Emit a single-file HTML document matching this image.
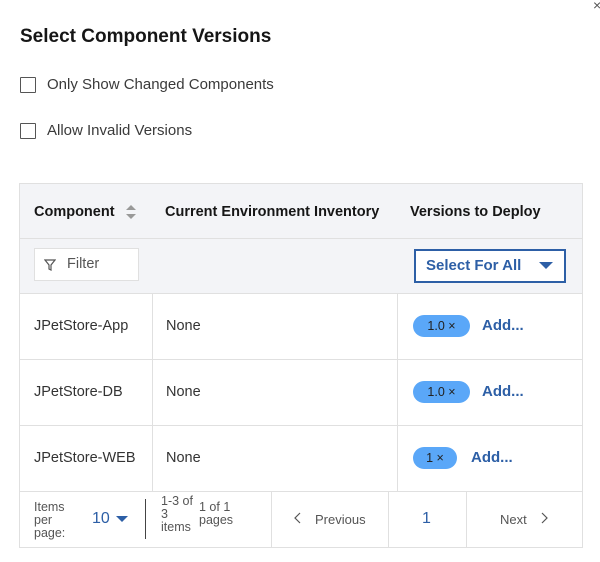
<!DOCTYPE html>
<html><head><style>
*{box-sizing:border-box;margin:0;padding:0}
body{width:600px;height:562px;background:#fff;font-family:"Liberation Sans",sans-serif;color:#161616;position:relative;overflow:hidden}
.a{position:absolute}
h1{position:absolute;left:20px;top:26px;font-size:19px;font-weight:bold;color:#161616}
.cb{position:absolute;left:20px;width:16px;height:16px;border:1.5px solid #555;border-radius:1px}
.lbl{position:absolute;left:47px;font-size:15px;color:#3a3a3a}
.tbl{position:absolute;left:19px;top:183px;width:564px;height:365px;border:1px solid #e0e0e0}
.hd{position:absolute;top:0;left:0;width:562px;height:110px;background:#f3f4f7;border-bottom:1px solid #e0e0e0}
.th{position:absolute;top:20px;font-size:14.5px;font-weight:bold;color:#161616}
.td{position:absolute;font-size:14.5px;color:#333}
.vl{position:absolute;width:1px;background:#e0e0e0}
.hl{position:absolute;left:0;width:562px;height:1px;background:#e0e0e0}
.tag{position:absolute;height:22px;background:#5aa7f8;border-radius:11px;font-size:12.5px;color:#222;padding:4px 0 0 0;text-align:center}
.add{position:absolute;font-size:15px;font-weight:bold;color:#2d5fa6}
.sm{position:absolute;font-size:12.5px;color:#555;line-height:13px}
</style></head><body>
<div class="a" style="left:593px;top:-3px;font-size:14px;color:#555">×</div>
<h1>Select Component Versions</h1>
<div class="cb" style="top:77px"></div><div class="lbl" style="top:76px">Only Show Changed Components</div>
<div class="cb" style="top:123px"></div><div class="lbl" style="top:122px">Allow Invalid Versions</div>
<div class="tbl">
 <div class="hd"></div>
 <div class="hl" style="top:54px"></div>
 <div class="th" style="left:14px">Component</div>
 <svg class="a" style="left:105px;top:20px" width="12" height="16"><path d="M1 6L6 1L11 6Z" fill="#999"/><path d="M1 10L6 15L11 10Z" fill="#999"/></svg>
 <div class="th" style="left:145px">Current Environment Inventory</div>
 <div class="th" style="left:390px">Versions to Deploy</div>
 <div class="a" style="left:14px;top:64px;width:105px;height:33px;background:#fff;border:1px solid #e0e0e0"></div>
 <svg class="a" style="left:24px;top:75px" width="12" height="12"><path d="M1 1H11L7 6V11L5 10V6Z" fill="none" stroke="#555" stroke-width="1.2"/></svg>
 <div class="td" style="left:47px;top:72px;color:#555">Filter</div>
 <div class="a" style="left:394px;top:65px;width:152px;height:34px;border:2px solid #2d5fa6;background:#fff"></div>
 <div class="a" style="left:406px;top:73px;font-size:15px;font-weight:bold;color:#2d5fa6">Select For All</div>
 <svg class="a" style="left:519px;top:78px" width="14" height="8"><path d="M0 0H14L7 7Z" fill="#2d5fa6"/></svg>
 <div class="vl" style="left:132px;top:110px;height:198px"></div>
 <div class="vl" style="left:377px;top:110px;height:198px"></div>
 <div class="hl" style="top:175px"></div>
 <div class="hl" style="top:241px"></div>
 <div class="hl" style="top:307px"></div>
 <div class="td" style="left:14px;top:134px">JPetStore-App</div><div class="td" style="left:146px;top:134px">None</div>
 <div class="tag" style="left:393px;top:131px;width:57px">1.0 ×</div><div class="add" style="left:462px;top:133px">Add...</div>
 <div class="td" style="left:14px;top:200px">JPetStore-DB</div><div class="td" style="left:146px;top:200px">None</div>
 <div class="tag" style="left:393px;top:197px;width:57px">1.0 ×</div><div class="add" style="left:462px;top:199px">Add...</div>
 <div class="td" style="left:14px;top:266px">JPetStore-WEB</div><div class="td" style="left:146px;top:266px">None</div>
 <div class="tag" style="left:393px;top:263px;width:44px">1 ×</div><div class="add" style="left:451px;top:265px">Add...</div>
 <div class="sm" style="left:14px;top:317px">Items<br>per<br>page:</div>
 <div class="a" style="left:72px;top:326px;font-size:16px;color:#2d5fa6">10</div>
 <svg class="a" style="left:96px;top:332px" width="12" height="7"><path d="M0 0H12L6 6Z" fill="#2d5fa6"/></svg>
 <div class="a" style="left:125px;top:315px;width:1px;height:40px;background:#444"></div>
 <div class="sm" style="left:141px;top:311px">1-3 of<br>3<br>items</div>
 <div class="sm" style="left:179px;top:317px">1 of 1<br>pages</div>
 <div class="vl" style="left:251px;top:307px;height:56px"></div>
 <div class="vl" style="left:368px;top:307px;height:56px"></div>
 <div class="vl" style="left:446px;top:307px;height:56px"></div>
 <svg class="a" style="left:274px;top:328px" width="8" height="12"><path d="M6 1L1 6L6 11" fill="none" stroke="#555" stroke-width="1.2"/></svg>
 <div class="a" style="left:295px;top:328px;font-size:13px;color:#555">Previous</div>
 <div class="a" style="left:402px;top:326px;font-size:16px;color:#2d5fa6">1</div>
 <div class="a" style="left:480px;top:328px;font-size:13px;color:#555">Next</div>
 <svg class="a" style="left:520px;top:328px" width="8" height="12"><path d="M2 1L7 6L2 11" fill="none" stroke="#555" stroke-width="1.2"/></svg>
</div>
</body></html>
